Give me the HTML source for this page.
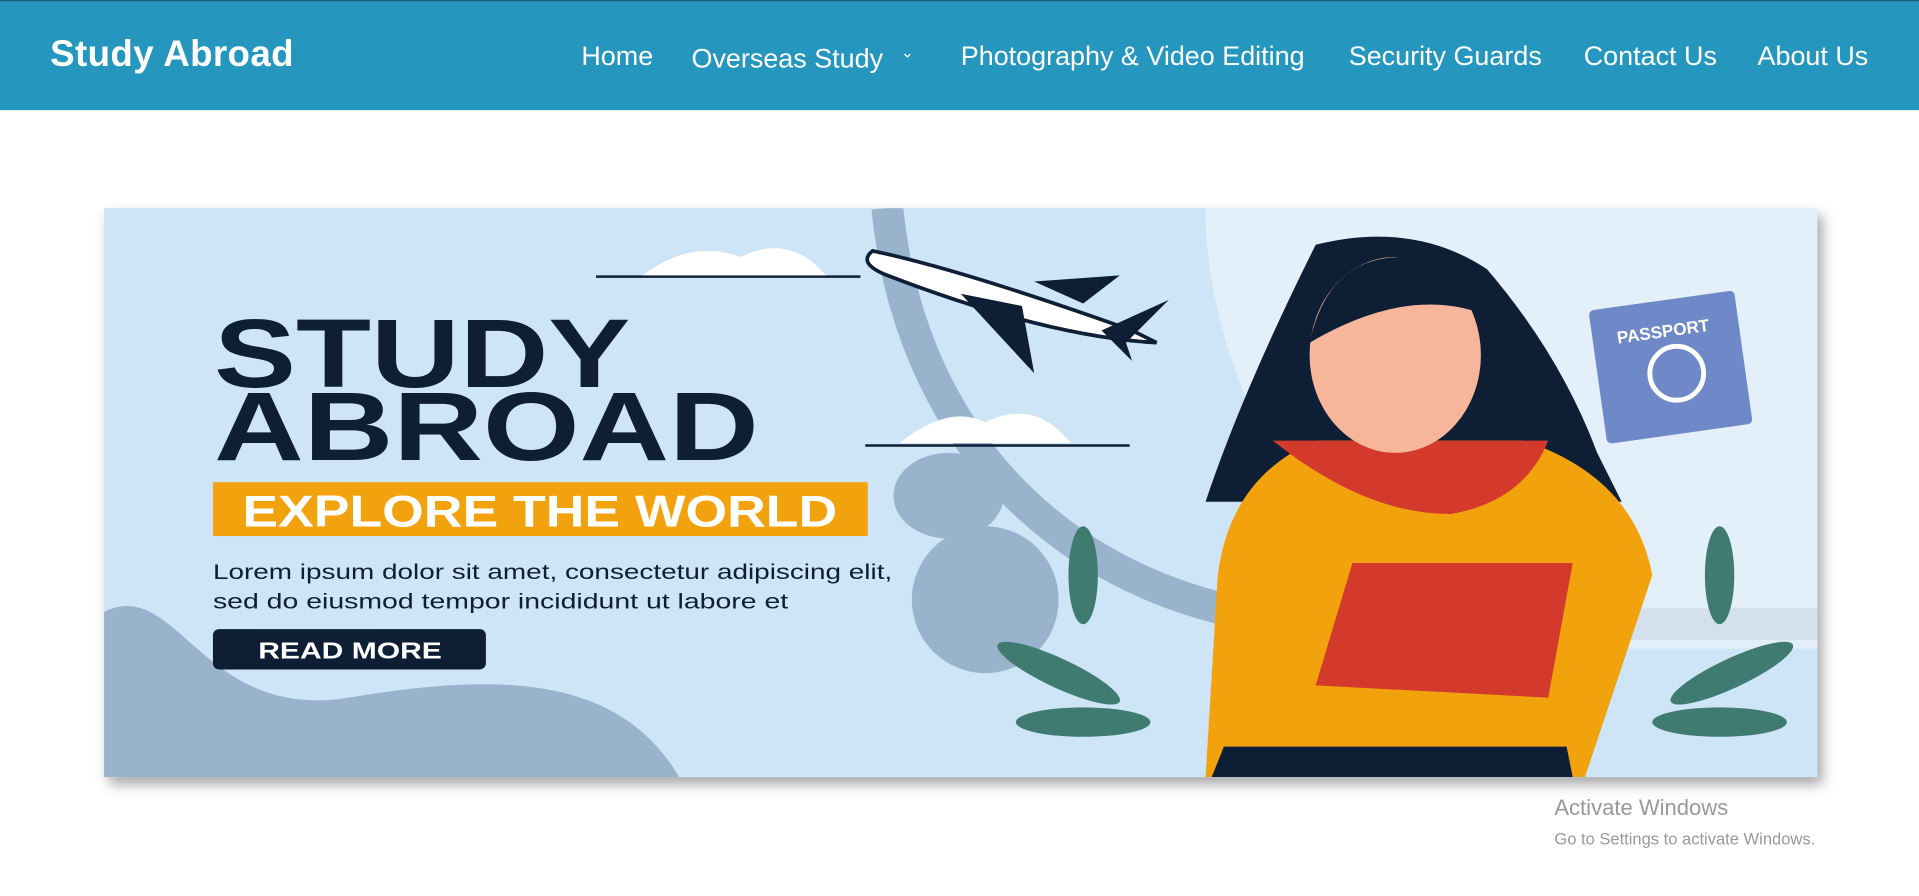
<!DOCTYPE html>
<html><head><meta charset="utf-8"><style>
html,body{margin:0;padding:0;width:1919px;height:896px;overflow:hidden;background:#fff;font-family:"Liberation Sans",sans-serif}
#w{width:1568px;height:732px;transform:scale(1.2239);transform-origin:0 0;position:relative}
header{position:absolute;left:0;top:0;width:1568px;height:90px;background:#2596be;border-top:1px solid #1d5d75;box-sizing:border-box}
.logo{position:absolute;left:41px;top:27px;color:#fff;font-weight:bold;font-size:30px;letter-spacing:.3px}
.n{position:absolute;top:32px;color:#fff;font-size:22px;white-space:nowrap}
.banner{position:absolute;left:85px;top:170px;width:1400px;height:465px;background:#cde5f6;box-shadow:4px 6px 10px rgba(0,0,0,.35);overflow:hidden}
.aw{position:absolute;left:1270px;top:650px;color:#999;font-size:18px}
.aw2{position:absolute;left:1270px;top:678px;color:#999;font-size:13.5px}
</style></head><body><div id="w">
<header><div class="logo">Study Abroad</div>
<span class="n" style="left:475px">Home</span>
<span class="n" style="left:565px;top:34px">Overseas Study</span>
<span class="n" style="left:736px;top:34px;font-size:13px">&#8964;</span>
<span class="n" style="left:785px">Photography &amp; Video Editing</span>
<span class="n" style="left:1102px">Security Guards</span>
<span class="n" style="left:1294px">Contact Us</span>
<span class="n" style="left:1436px">About Us</span>
</header>
<div class="banner"><svg width="1400" height="465" viewBox="0 0 1400 465">
<path d="M0 330 C60 300 80 420 200 400 C320 380 420 380 470 465 L0 465Z" fill="#98b3cb"/>
<path d="M640 0 C660 200 800 330 1000 340 L1400 340" stroke="#98b3cb" stroke-width="26" fill="none"/>
<path d="M900 0 L1400 0 L1400 360 L1100 360 C1000 300 900 150 900 0Z" fill="#eef5fb" opacity=".7"/>
<ellipse cx="690" cy="235" rx="45" ry="35" fill="#98b3cb"/>
<ellipse cx="720" cy="320" rx="60" ry="60" fill="#98b3cb"/>
<line x1="402" y1="56" x2="618" y2="56" stroke="#0d1e35" stroke-width="2"/>
<line x1="622" y1="194" x2="838" y2="194" stroke="#0d1e35" stroke-width="2"/>
<path d="M440 55 Q480 25 520 40 Q560 20 590 55Z" fill="#fff"/>
<path d="M650 192 Q690 160 720 175 Q760 155 790 192Z" fill="#fff"/>
<path d="M628 35 Q700 50 840 100 L860 110 Q770 105 640 55 Q615 45 628 35Z" fill="#fff" stroke="#0d1e35" stroke-width="3"/>
<path d="M700 70 L760 135 L750 80Z M760 60 L830 55 L800 78Z M815 100 L870 75 L835 110 L840 125Z" fill="#0d1e35"/>
<text x="90" y="146" font-family="Liberation Sans" font-weight="bold" font-size="80" fill="#0d1e35" textLength="340" lengthAdjust="spacingAndGlyphs">STUDY</text>
<text x="90" y="206" font-family="Liberation Sans" font-weight="bold" font-size="80" fill="#0d1e35" textLength="445" lengthAdjust="spacingAndGlyphs">ABROAD</text>
<rect x="89" y="224" width="535" height="44" fill="#f2a20c"/>
<text x="113" y="260" font-family="Liberation Sans" font-weight="bold" font-size="36" fill="#fff" textLength="486" lengthAdjust="spacingAndGlyphs">EXPLORE THE WORLD</text>
<text x="89" y="303" font-family="Liberation Sans" font-size="17" fill="#0d1e35" textLength="555" lengthAdjust="spacingAndGlyphs">Lorem ipsum dolor sit amet, consectetur adipiscing elit,</text>
<text x="89" y="327" font-family="Liberation Sans" font-size="17" fill="#0d1e35" textLength="470" lengthAdjust="spacingAndGlyphs">sed do eiusmod tempor incididunt ut labore et</text>
<rect x="89" y="344" width="223" height="33" rx="5" fill="#0d1e35"/>
<text x="126" y="368" font-family="Liberation Sans" font-weight="bold" font-size="19" fill="#fff" textLength="150" lengthAdjust="spacingAndGlyphs">READ MORE</text>
<g fill="#3f7b70"><ellipse cx="780" cy="380" rx="55" ry="12" transform="rotate(25 780 380)"/><ellipse cx="800" cy="420" rx="55" ry="12"/><ellipse cx="1330" cy="380" rx="55" ry="12" transform="rotate(-25 1330 380)"/><ellipse cx="1320" cy="420" rx="55" ry="12"/><ellipse cx="800" cy="300" rx="12" ry="40"/><ellipse cx="1320" cy="300" rx="12" ry="40"/></g>
<path d="M990 30 Q1070 10 1130 50 Q1190 120 1220 200 L1240 240 L900 240 Q930 150 990 30Z" fill="#0d1e35"/>
<path d="M900 465 L910 300 Q920 220 990 190 L1160 190 Q1250 220 1265 300 L1210 465Z" fill="#f2a20c"/>
<path d="M955 190 Q1030 250 1100 250 Q1160 240 1180 190Z" fill="#d33a2c"/>
<ellipse cx="1055" cy="120" rx="70" ry="80" fill="#f7b59b"/>
<path d="M985 110 Q1000 40 1060 40 Q1120 40 1135 90 Q1070 60 985 110Z" fill="#0d1e35"/>
<rect x="1220" y="75" width="120" height="110" rx="4" fill="#6f88c8" transform="rotate(-8 1280 130)"/>
<text x="1240" y="105" font-family="Liberation Sans" font-weight="bold" font-size="14" fill="#fff" transform="rotate(-8 1280 130)">PASSPORT</text>
<circle cx="1285" cy="135" r="22" stroke="#fff" stroke-width="4" fill="none"/>
<path d="M990 390 L1020 290 L1200 290 L1180 400Z" fill="#d33a2c"/>
<path d="M905 465 L915 440 L1195 440 L1200 465Z" fill="#0d1e35"/>
</svg></div>
<div class="aw">Activate Windows</div><div class="aw2">Go to Settings to activate Windows.</div>
</div></body></html>
